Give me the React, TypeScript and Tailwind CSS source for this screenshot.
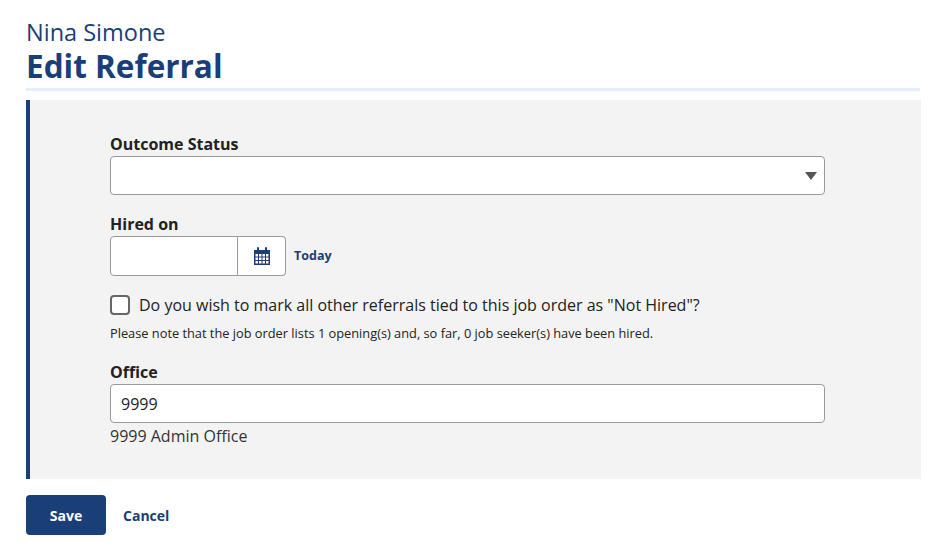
import React from "react";

export default function App() {
  return (
    <div className="min-h-[556px] bg-white px-[26px] pt-[17px] text-[#222]" style={{ fontFamily: '"Open Sans", sans-serif' }}>
      <div className="text-[23.5px] leading-[30px] text-[#1a3e78]">Nina Simone</div>
      <h1 className="text-[31.5px] font-bold leading-[38px] text-[#1a3e78]">Edit Referral</h1>
      <div className="mt-[3px] h-[3px] w-[894px] bg-[#e5effa]" />
      <div className="mt-[9px] w-[895px] border-l-4 border-[#1a3e78] bg-[#f3f3f3] pb-[32px] pl-[80px] pr-[96px] pt-[33px]">
        <label className="block text-[16px] font-bold leading-[22px]">Outcome Status</label>
        <div className="mt-[1px] flex h-[39px] items-center justify-end rounded border border-[#999] bg-white pr-[7px]">
          <svg width="12" height="8" viewBox="0 0 12 8"><path d="M0 0h12L6 8z" fill="#555" /></svg>
        </div>
        <label className="mt-[18px] block text-[16px] font-bold leading-[22px]">Hired on</label>
        <div className="mt-[1px] flex items-center">
          <div className="h-[40px] w-[128px] rounded-l border border-[#999] bg-white" />
          <div className="flex h-[40px] w-[48px] items-center justify-center rounded-r border border-l-0 border-[#999] bg-white">
            <svg width="18" height="19" viewBox="0 0 18 19" fill="#1a3e78">
              <rect x="4" y="0" width="2" height="4" rx="1" />
              <rect x="12" y="0" width="2" height="4" rx="1" />
              <path d="M1 3h16v15H1z M2.5 7v9.5h13V7z" fillRule="evenodd" />
              <path d="M5.5 7v10M9 7v10M12.5 7v10M2 10h14M2 13.5h14" stroke="#1a3e78" strokeWidth="1" />
            </svg>
          </div>
          <a className="ml-[8px] text-[12.5px] font-bold text-[#1a3e78]">Today</a>
        </div>
        <div className="mt-[18px] flex items-center">
          <div className="h-[20px] w-[20px] rounded border-2 border-[#666] bg-white" />
          <span className="ml-[9px] text-[16px] leading-[22px]">Do you wish to mark all other referrals tied to this job order as "Not Hired"?</span>
        </div>
        <p className="mt-[9px] text-[12.8px] leading-[17px]">Please note that the job order lists 1 opening(s) and, so far, 0 job seeker(s) have been hired.</p>
        <label className="mt-[19px] block text-[16px] font-bold leading-[22px]">Office</label>
        <div className="mt-[1px] flex h-[39px] items-center rounded border border-[#999] bg-white px-[10px] text-[16px]">9999</div>
        <div className="mt-[2px] text-[16px] leading-[22px] text-[#333]">9999 Admin Office</div>
      </div>
      <div className="mt-[16px] flex items-center">
        <button className="h-[40px] w-[80px] rounded bg-[#1a3e78] text-[14px] font-bold text-white">Save</button>
        <a className="ml-[17px] text-[14px] font-bold text-[#1a3e78]">Cancel</a>
      </div>
    </div>
  );
}
